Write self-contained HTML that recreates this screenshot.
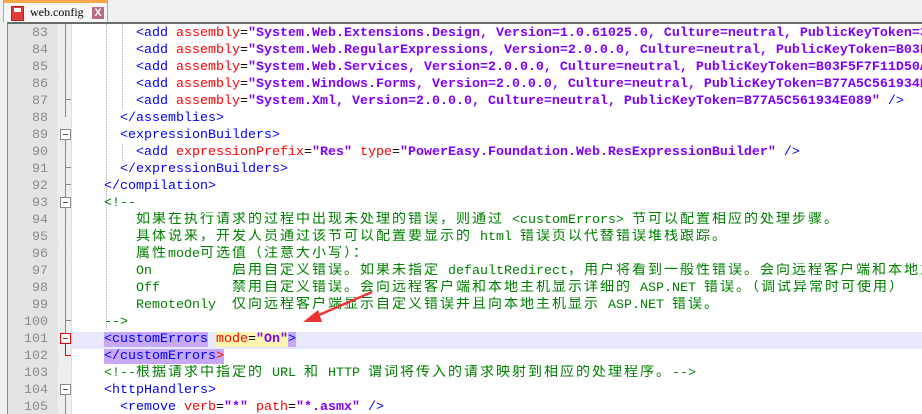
<!DOCTYPE html>
<html><head><meta charset="utf-8"><style>
*{margin:0;padding:0;box-sizing:border-box}
body{width:922px;height:414px;overflow:hidden;background:#f0f0f0;position:relative;font-family:"Liberation Mono","Noto Sans CJK SC",monospace}
.tab{position:absolute;left:3px;top:0;width:105px;height:22px;background:#f7f7f7;border-left:1px solid #aaa;border-right:1px solid #aaa;border-top:3px solid #f7a64a}
.tab .ic{position:absolute;left:7px;top:3px;width:13px;height:15px;background:#e23b3b;border:1px solid #b22}
.tab .ic:after{content:"";position:absolute;left:2px;top:1px;width:7px;height:4px;background:#fff}
.tab .t{position:absolute;left:26px;top:2px;font-size:12px;color:#000;font-family:"Liberation Serif","Noto Serif CJK SC",serif}
.tab .x{position:absolute;left:88px;top:4px;width:12px;height:12px;background:#b96a8a;color:#fff;font-size:11px;line-height:12px;text-align:center;font-family:"Liberation Sans",sans-serif;font-weight:bold}
.ed{position:absolute;left:7px;top:22px;width:915px;height:392px;background:#fff;border-top:2px solid #6b6b6b;border-left:1px solid #888;overflow:hidden}
.gut{position:absolute;left:0;top:0;width:50px;height:100%;background:#e4e4e4}
.fold{position:absolute;left:50px;top:0;width:14px;height:100%;background:repeating-linear-gradient(45deg,#f4f4f4 0 1px,#e9e9e9 1px 2px);border-right:1px solid #e0e0e0}
.row{position:absolute;left:0;height:17px;width:915px;line-height:17px;font-size:13.33px;white-space:pre;overflow:hidden}
.n{position:absolute;left:0;width:40px;text-align:right;color:#8a8a8a}
.c{position:absolute;left:64px;}
.k{color:#0000ff}.a{color:#ff0000}.v{color:#8000ff;font-weight:bold}.g{color:#008000}.p{color:#000}
.z{font-size:14px;letter-spacing:2px}
.hl{background:#c6a8f5}
.hy{background:#f9f5b0}
.vl{position:absolute;border-left:1px dotted #aaa}
.fb{position:absolute;left:52px;width:11px;height:11px;border:1px solid #888;background:#fff}
.fb:after{content:"";position:absolute;left:2px;top:4px;width:5px;height:1px;background:#555}
.fl{position:absolute;left:57px;width:1px;background:#888}
.ft{position:absolute;left:57px;width:6px;height:1px;background:#888}
</style></head><body>
<div class="tab"><div class="ic"></div><div class="t">web.config</div><div class="x">X</div></div>
<div class="ed">
<div class="gut"></div><div class="fold"></div>
<div class="row" style="top:308px;left:64px;width:860px;background:#e8e8ff"></div>
<div class="vl" style="left:98px;top:0;height:306px"></div>
<div class="vl" style="left:114px;top:0;height:85px"></div>
<div class="vl" style="left:114px;top:120px;height:17px"></div>
<div class="fl" style="top:0;height:93px;"></div>
<div class="ft" style="top:75px"></div>
<div class="fb" style="top:105px"></div>
<div class="fl" style="top:116px;height:60px"></div>
<div class="ft" style="top:143px"></div>
<div class="ft" style="top:160px"></div>
<div class="fb" style="top:173px"></div>
<div class="fl" style="top:184px;height:126px"></div>
<div class="ft" style="top:296px"></div>
<div class="fb" style="top:309px;border-color:#e00"></div>
<div class="fl" style="top:320px;height:12px;background:#e00"></div>
<div class="ft" style="top:331px;background:#e00"></div>
<div class="fb" style="top:360px"></div>
<div class="fl" style="top:371px;height:21px"></div>

<div class="row" style="top:1px"><span class="n">83</span><span class="c">        <span class="k">&lt;add</span> <span class="a">assembly</span><span class="p">=</span><span class="v">"System.Web.Extensions.Design, Version=1.0.61025.0, Culture=neutral, PublicKeyToken=31BF3856AD364E35"</span></span></div>
<div class="row" style="top:18px"><span class="n">84</span><span class="c">        <span class="k">&lt;add</span> <span class="a">assembly</span><span class="p">=</span><span class="v">"System.Web.RegularExpressions, Version=2.0.0.0, Culture=neutral, PublicKeyToken=B03F5F7F11D50A3A"</span></span></div>
<div class="row" style="top:35px"><span class="n">85</span><span class="c">        <span class="k">&lt;add</span> <span class="a">assembly</span><span class="p">=</span><span class="v">"System.Web.Services, Version=2.0.0.0, Culture=neutral, PublicKeyToken=B03F5F7F11D50A3A"</span></span></div>
<div class="row" style="top:52px"><span class="n">86</span><span class="c">        <span class="k">&lt;add</span> <span class="a">assembly</span><span class="p">=</span><span class="v">"System.Windows.Forms, Version=2.0.0.0, Culture=neutral, PublicKeyToken=B77A5C561934E089"</span></span></div>
<div class="row" style="top:69px"><span class="n">87</span><span class="c">        <span class="k">&lt;add</span> <span class="a">assembly</span><span class="p">=</span><span class="v">"System.Xml, Version=2.0.0.0, Culture=neutral, PublicKeyToken=B77A5C561934E089"</span> <span class="k">/&gt;</span></span></div>
<div class="row" style="top:86px"><span class="n">88</span><span class="c">      <span class="k">&lt;/assemblies&gt;</span></span></div>
<div class="row" style="top:103px"><span class="n">89</span><span class="c">      <span class="k">&lt;expressionBuilders&gt;</span></span></div>
<div class="row" style="top:120px"><span class="n">90</span><span class="c">        <span class="k">&lt;add</span> <span class="a">expressionPrefix</span><span class="p">=</span><span class="v">"Res"</span> <span class="a">type</span><span class="p">=</span><span class="v">"PowerEasy.Foundation.Web.ResExpressionBuilder"</span> <span class="k">/&gt;</span></span></div>
<div class="row" style="top:137px"><span class="n">91</span><span class="c">      <span class="k">&lt;/expressionBuilders&gt;</span></span></div>
<div class="row" style="top:154px"><span class="n">92</span><span class="c">    <span class="k">&lt;/compilation&gt;</span></span></div>
<div class="row" style="top:171px"><span class="n">93</span><span class="c g">    &lt;!--</span></div>
<div class="row" style="top:188px"><span class="n">94</span><span class="c g">        <span class="z">如果在执行请求的过程中出现未处理的错误，则通过</span> &lt;customErrors&gt; <span class="z">节可以配置相应的处理步骤。</span></span></div>
<div class="row" style="top:205px"><span class="n">95</span><span class="c g">        <span class="z">具体说来，开发人员通过该节可以配置要显示的</span> html <span class="z">错误页以代替错误堆栈跟踪。</span></span></div>
<div class="row" style="top:222px"><span class="n">96</span><span class="c g">        <span class="z">属性</span>mode<span class="z">可选值（注意大小写）：</span></span></div>
<div class="row" style="top:239px"><span class="n">97</span><span class="c g">        On          <span class="z">启用自定义错误。如果未指定</span> defaultRedirect<span class="z">，用户将看到一般性错误。会向远程客户端和本地主机</span></span></div>
<div class="row" style="top:256px"><span class="n">98</span><span class="c g">        Off         <span class="z">禁用自定义错误。会向远程客户端和本地主机显示详细的</span> ASP.NET <span class="z">错误。（调试异常时可使用）</span></span></div>
<div class="row" style="top:273px"><span class="n">99</span><span class="c g">        RemoteOnly  <span class="z">仅向远程客户端显示自定义错误并且向本地主机显示</span> ASP.NET <span class="z">错误。</span></span></div>
<div class="row" style="top:290px"><span class="n">100</span><span class="c g">    --&gt;</span></div>
<div class="row" style="top:307px"><span class="n">101</span><span class="c">    <span class="k hl">&lt;customErrors</span> <span class="hy"><span class="a">mode</span><span class="p">=</span><span class="v">"On"</span></span><span class="k hl">&gt;</span></span></div>
<div class="row" style="top:324px"><span class="n">102</span><span class="c">    <span class="k hl">&lt;/customErrors</span><span class="a hl">&gt;</span></span></div>
<div class="row" style="top:341px"><span class="n">103</span><span class="c g">    &lt;!--<span class="z">根据请求中指定的</span> URL <span class="z">和</span> HTTP <span class="z">谓词将传入的请求映射到相应的处理程序。</span>--&gt;</span></div>
<div class="row" style="top:358px"><span class="n">104</span><span class="c">    <span class="k">&lt;httpHandlers&gt;</span></span></div>
<div class="row" style="top:375px"><span class="n">105</span><span class="c">      <span class="k">&lt;remove</span> <span class="a">verb</span><span class="p">=</span><span class="v">"*"</span> <span class="a">path</span><span class="p">=</span><span class="v">"*.asmx"</span> <span class="k">/&gt;</span></span></div>
</div>
<svg style="position:absolute;left:0;top:0" width="922" height="414">
<line x1="372" y1="292" x2="312" y2="318" stroke="#ee3333" stroke-width="2.5"/>
<polygon points="303,322 318,310 322,322" fill="#ee3333"/>
</svg>
</body></html>
